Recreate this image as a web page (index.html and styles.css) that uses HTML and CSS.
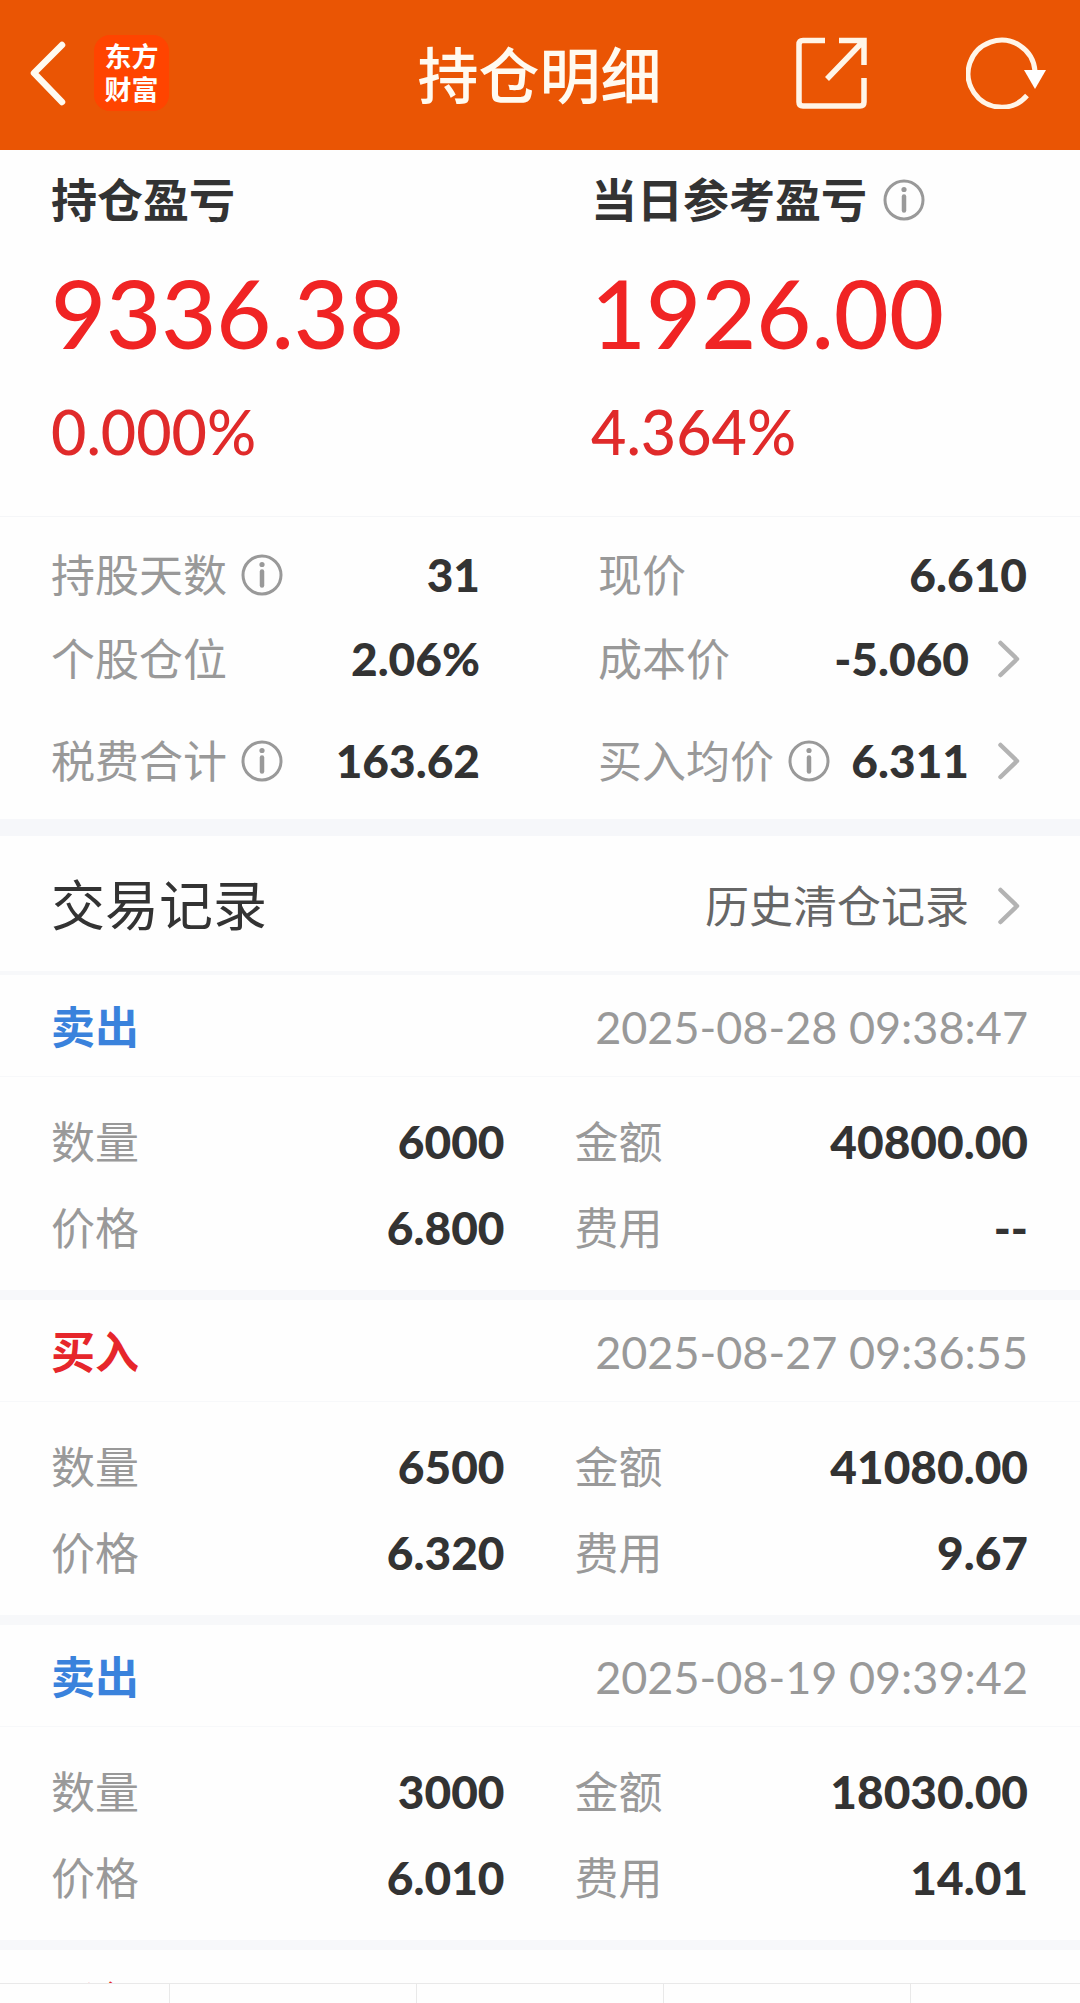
FILE: index.html
```html
<!DOCTYPE html>
<html lang="zh-CN">
<head>
    <meta charset="UTF-8">
    <meta name="viewport" content="width=device-width, initial-scale=1.0">
    <title>持仓明细</title>
    <link rel="stylesheet" href="styles.css">
</head>
<body>
    <!-- shared icons -->
    <svg class="sprite" aria-hidden="true">
        <symbol id="info" viewBox="0 0 42 42">
            <circle cx="21" cy="21" r="19" fill="none" stroke="currentColor" stroke-width="3"/>
            <circle cx="21" cy="10.500" r="2.600" fill="currentColor"/>
            <path d="M21 17.500V31.500" fill="none" stroke="currentColor" stroke-width="4.500" stroke-linecap="round"/>
        </symbol>
        <symbol id="arrow" viewBox="0 0 30 42">
            <path d="M3.500 5L20 21L3.500 37" fill="none" stroke="currentColor" stroke-width="4.500" stroke-linecap="round" stroke-linejoin="round"/>
        </symbol>
    </svg>

    <div class="app">
        <header class="topbar">
            <div class="topbar-left">
                <button class="icon-btn" aria-label="返回">
                    <svg width="42" height="72" viewBox="0 0 42 72">
                        <path d="M35 8L7 36L35 65" fill="none" stroke="#fffaf0" stroke-width="6.500" stroke-linecap="round" stroke-linejoin="round"/>
                    </svg>
                </button>
                <div class="logo">东方<br>财富</div>
            </div>
            <h1>持仓明细</h1>
            <div class="topbar-right">
                <button class="icon-btn" aria-label="分享">
                    <svg width="71" height="72" viewBox="0 0 71 72">
                        <path d="M29 3.500H7Q3 3.500 3 7.500V65Q3 69 7 69H64Q68 69 68 65V41M43 3.500H68V28M68 3.500L31 42" fill="none" stroke="#fff5e8" stroke-width="5.500"/>
                    </svg>
                </button>
                <button class="icon-btn" aria-label="刷新">
                    <svg width="86" height="72" viewBox="0 0 86 72">
                        <path d="M61 58.500A33.500 33.500 0 1 1 69 34" fill="none" stroke="#fff5e8" stroke-width="5"/>
                        <path d="M58 33H80L69 52Z" fill="#fff"/>
                    </svg>
                </button>
            </div>
        </header>

        <section class="summary">
            <div class="summary-item">
                <h2>持仓盈亏</h2>
                <p class="amount">9336.38</p>
                <p class="rate">0.000%</p>
            </div>
            <div class="summary-item">
                <h2>当日参考盈亏 <button class="icon-btn info" aria-label="说明"><svg width="42" height="42"><use href="#info"/></svg></button></h2>
                <p class="amount">1926.00</p>
                <p class="rate">4.364%</p>
            </div>
        </section>

        <section class="details">
            <div class="cell">
                <span class="label">持股天数</span>
                <button class="icon-btn info" aria-label="说明"><svg width="42" height="42"><use href="#info"/></svg></button>
                <span class="value">31</span>
            </div>
            <div class="cell">
                <span class="label">现价</span>
                <span class="value">6.610</span>
            </div>
            <div class="cell">
                <span class="label">个股仓位</span>
                <span class="value">2.06%</span>
            </div>
            <a class="cell" href="#">
                <span class="label">成本价</span>
                <span class="value">-5.060</span>
                <svg class="arrow" width="30" height="42"><use href="#arrow"/></svg>
            </a>
            <div class="cell cell-last">
                <span class="label">税费合计</span>
                <button class="icon-btn info" aria-label="说明"><svg width="42" height="42"><use href="#info"/></svg></button>
                <span class="value">163.62</span>
            </div>
            <div class="cell cell-last">
                <span class="label">买入均价</span>
                <button class="icon-btn info" aria-label="说明"><svg width="42" height="42"><use href="#info"/></svg></button>
                <span class="value">6.311</span>
                <svg class="arrow" width="30" height="42"><use href="#arrow"/></svg>
            </div>
        </section>

        <div class="records-head">
            <h2>交易记录</h2>
            <a href="#">历史清仓记录<svg class="arrow" width="30" height="42"><use href="#arrow"/></svg></a>
        </div>

        <main class="records">
            <article class="record">
                <div class="record-head">
                    <h3 class="sell">卖出</h3>
                    <time>2025-08-28 09:38:47</time>
                </div>
                <div class="record-body">
                    <div class="cell"><span class="label">数量</span><span class="value">6000</span></div>
                    <div class="cell"><span class="label">金额</span><span class="value">40800.00</span></div>
                    <div class="cell"><span class="label">价格</span><span class="value">6.800</span></div>
                    <div class="cell"><span class="label">费用</span><span class="value">--</span></div>
                </div>
            </article>
            <article class="record">
                <div class="record-head">
                    <h3 class="buy">买入</h3>
                    <time>2025-08-27 09:36:55</time>
                </div>
                <div class="record-body">
                    <div class="cell"><span class="label">数量</span><span class="value">6500</span></div>
                    <div class="cell"><span class="label">金额</span><span class="value">41080.00</span></div>
                    <div class="cell"><span class="label">价格</span><span class="value">6.320</span></div>
                    <div class="cell"><span class="label">费用</span><span class="value">9.67</span></div>
                </div>
            </article>
            <article class="record">
                <div class="record-head">
                    <h3 class="sell">卖出</h3>
                    <time>2025-08-19 09:39:42</time>
                </div>
                <div class="record-body">
                    <div class="cell"><span class="label">数量</span><span class="value">3000</span></div>
                    <div class="cell"><span class="label">金额</span><span class="value">18030.00</span></div>
                    <div class="cell"><span class="label">价格</span><span class="value">6.010</span></div>
                    <div class="cell"><span class="label">费用</span><span class="value">14.01</span></div>
                </div>
            </article>
            <article class="record">
                <div class="record-head">
                    <h3 class="buy">买入</h3>
                </div>
            </article>
        </main>

        <footer class="tabs">
            <div></div>
            <div></div>
            <div></div>
            <div></div>
            <div></div>
        </footer>
    </div>
</body>
</html>
```
FILE: styles.css
```css
* {
    box-sizing: border-box;
}

body {
    margin: 0;
    background: #fefefe;
    color: #333;
    font-family: Lato, "Noto Sans CJK SC", sans-serif;
    font-size: 44px;
    line-height: 60px;
}

h1, h2, h3, p {
    margin: 0;
}

a {
    color: inherit;
    text-decoration: none;
}

svg {
    display: block;
}

.sprite {
    position: absolute;
    width: 0;
    height: 0;
}

.app {
    display: flex;
    flex-direction: column;
    height: 100vh;
    overflow: hidden;
}

.app > * {
    flex-shrink: 0;
}

.icon-btn {
    padding: 0;
    border: none;
    background: none;
    cursor: pointer;
}

.info {
    color: #999;
}

.arrow {
    margin-left: 28px;
    color: #b3b3b3;
}

/* top bar */
.topbar {
    display: grid;
    grid-template-columns: 1fr auto 1fr;
    align-items: center;
    height: 150px;
    padding: 0 28px 4px 27px;
    background: #ea5504;
    color: #fffaf0;
}

.topbar-left,
.topbar-right {
    display: flex;
    align-items: center;
}

.topbar-left {
    gap: 25px;
}

.topbar-right {
    justify-content: flex-end;
    gap: 99px;
}

.topbar h1 {
    padding-top: 6px;
    font-size: 61px;
    font-weight: 500;
}

.logo {
    width: 75px;
    height: 76px;
    padding-top: 5px;
    border-radius: 16px;
    background: #ff4400;
    color: #fff;
    font-size: 27px;
    font-weight: 700;
    line-height: 33px;
    text-align: center;
}

/* profit summary */
.summary {
    display: flex;
    padding: 20px 0 44px;
    border-bottom: 1px solid #f5f6f8;
}

.summary-item {
    flex: 1;
    padding-left: 51px;
}

.summary h2 {
    display: flex;
    align-items: center;
    gap: 16px;
    font-size: 46px;
    font-weight: 700;
}

.amount {
    margin-top: 22px;
    color: #f02424;
    font-size: 95px;
    font-weight: 500;
    line-height: 120px;
}

.rate {
    margin-top: 20px;
    color: #e02a2a;
    font-size: 61px;
    font-weight: 500;
    line-height: 80px;
}

/* position details */
.details {
    display: grid;
    grid-template-columns: 1fr 1fr;
    column-gap: 118px;
    padding: 16px 53px 16px 51px;
    border-bottom: 17px solid #f6f7fa;
}

.cell {
    display: flex;
    align-items: center;
    height: 84px;
}

.cell-last {
    margin-top: 18px;
}

.label {
    color: #999;
}

.cell .info {
    margin-left: 14px;
}

.value {
    margin-left: auto;
    font-size: 46px;
    font-weight: 900;
}

/* trade records */
.records-head {
    display: flex;
    align-items: center;
    justify-content: space-between;
    height: 139px;
    padding: 4px 53px 0 51px;
    border-bottom: 4px solid #f7f8fa;
}

.records-head h2 {
    font-size: 54px;
    font-weight: 400;
}

.records-head a {
    display: flex;
    align-items: center;
    color: #666;
}

.records {
    flex: 1 1 0;
    min-height: 0;
    overflow: hidden;
}

.record {
    border-bottom: 10px solid #f7f8fa;
}

.record-head {
    display: flex;
    align-items: center;
    justify-content: space-between;
    height: 102px;
    padding: 2px 52px 0 51px;
    border-bottom: 1px solid #f7f8fa;
}

.record-head h3 {
    font-size: 44px;
    font-weight: 700;
}

.sell {
    color: #3a82dc;
}

.buy {
    color: #e6262b;
}

.record-head time {
    color: #999;
    font-size: 45px;
}

.record-body {
    display: grid;
    grid-template-columns: 1fr 1fr;
    column-gap: 70px;
    padding: 22px 52px 19px 51px;
}

.record-body .cell {
    height: 86px;
}

/* bottom tabs, first and last run off the edges */
.tabs {
    display: flex;
    justify-content: center;
    height: 20px;
    border-top: 1px solid #e9e9e9;
}

.tabs div {
    flex: 0 0 247px;
    border-right: 1px solid #e9e9e9;
}
```
